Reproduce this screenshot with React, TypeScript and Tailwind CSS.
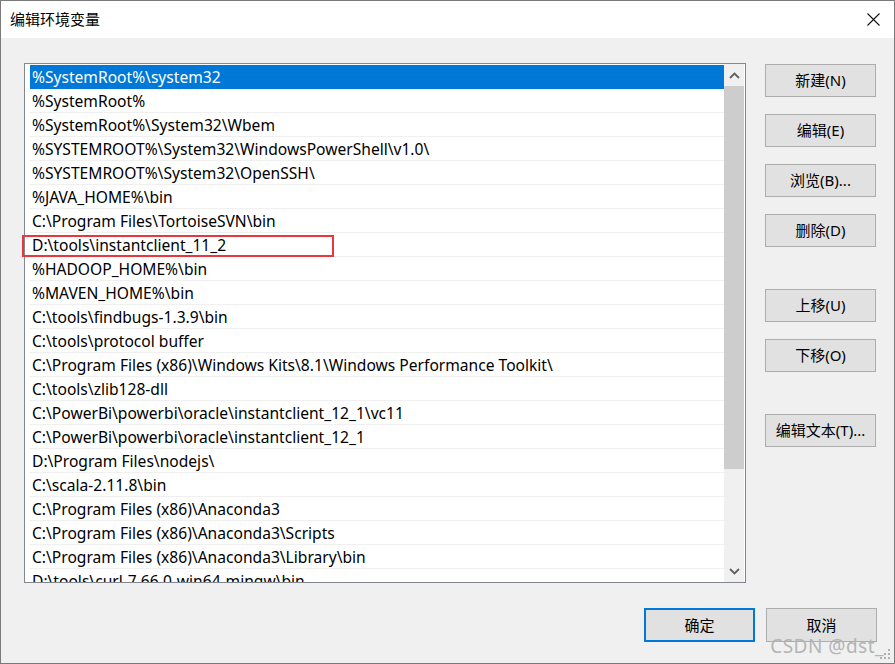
import React from "react";

const paths = [
  "%SystemRoot%\\system32",
  "%SystemRoot%",
  "%SystemRoot%\\System32\\Wbem",
  "%SYSTEMROOT%\\System32\\WindowsPowerShell\\v1.0\\",
  "%SYSTEMROOT%\\System32\\OpenSSH\\",
  "%JAVA_HOME%\\bin",
  "C:\\Program Files\\TortoiseSVN\\bin",
  "D:\\tools\\instantclient_11_2",
  "%HADOOP_HOME%\\bin",
  "%MAVEN_HOME%\\bin",
  "C:\\tools\\findbugs-1.3.9\\bin",
  "C:\\tools\\protocol buffer",
  "C:\\Program Files (x86)\\Windows Kits\\8.1\\Windows Performance Toolkit\\",
  "C:\\tools\\zlib128-dll",
  "C:\\PowerBi\\powerbi\\oracle\\instantclient_12_1\\vc11",
  "C:\\PowerBi\\powerbi\\oracle\\instantclient_12_1",
  "D:\\Program Files\\nodejs\\",
  "C:\\scala-2.11.8\\bin",
  "C:\\Program Files (x86)\\Anaconda3",
  "C:\\Program Files (x86)\\Anaconda3\\Scripts",
  "C:\\Program Files (x86)\\Anaconda3\\Library\\bin",
  "D:\\tools\\curl-7.66.0-win64-mingw\\bin",
];

function Btn({ label, className = "" }: { label: string; className?: string }) {
  return (
    <button
      type="button"
      className={`w-[111px] h-[33px] border border-[#adadad] bg-[#e1e1e1] text-[15px] text-black flex items-center justify-center ${className}`}
    >
      {label}
    </button>
  );
}

function Chevron({ down }: { down?: boolean }) {
  return (
    <svg width="11" height="7" viewBox="0 0 11 7" className={down ? "rotate-180" : ""}>
      <path d="M1 6 L5.5 1.5 L10 6" fill="none" stroke="#606060" strokeWidth="1.8" />
    </svg>
  );
}

export default function App() {
  return (
    <div
      className="w-[895px] h-[664px] border border-[#7a7a7a] bg-[#f0f0f0] flex flex-col relative overflow-hidden text-black"
      style={{ fontFamily: '"Noto Sans", "Noto Sans CJK SC", sans-serif' }}
    >
      {/* title bar */}
      <div className="h-[37px] bg-white flex items-center justify-between pl-[9px] pr-[14px]">
        <span className="text-[15px]">编辑环境变量</span>
        <svg width="13" height="13" viewBox="0 0 13 13">
          <path d="M0.5 0.5 L12.5 12.5 M12.5 0.5 L0.5 12.5" stroke="#111" strokeWidth="1.1" />
        </svg>
      </div>

      <div className="flex-1 flex flex-col pl-[23px] pr-[17px] pt-[25px]">
        <div className="flex gap-[19px]">
          {/* list box */}
          <div className="relative w-[722px] h-[520px] border border-[#828790] bg-white flex">
            <div className="flex-1 pl-[5px] pt-[1px] overflow-hidden">
              {paths.map((p, i) => (
                <div
                  key={p}
                  className={`h-[24px] flex items-center pl-[2px] pt-[2px] text-[15.6px] whitespace-nowrap border-b ${
                    i === 0
                      ? "bg-[#0078d7] text-white border-[#0078d7]"
                      : "border-[#f0f0f0]"
                  }`}
                >
                  {p}
                </div>
              ))}
            </div>
            {/* scrollbar */}
            <div className="w-[20px] mr-[1px] bg-[#f0f0f0] flex flex-col">
              <div className="h-[22px] flex items-center justify-center">
                <Chevron />
              </div>
              <div className="h-[383px] bg-[#cdcdcd]" />
              <div className="flex-1" />
              <div className="h-[22px] flex items-center justify-center">
                <Chevron down />
              </div>
            </div>
            {/* highlight annotation */}
            <div className="absolute left-[-3px] top-[171px] w-[312px] h-[22px] border-2 border-[#e8383d]" />
          </div>

          <div className="flex flex-col pt-[1px]">
            <Btn label="新建(N)" />
            <Btn label="编辑(E)" className="mt-[17px]" />
            <Btn label="浏览(B)..." className="mt-[17px]" />
            <Btn label="删除(D)" className="mt-[17px]" />
            <Btn label="上移(U)" className="mt-[42px]" />
            <Btn label="下移(O)" className="mt-[17px]" />
            <Btn label="编辑文本(T)..." className="mt-[42px]" />
          </div>
        </div>

        <div className="flex justify-end gap-[11px] mt-[25px]">
          <button
            type="button"
            className="w-[111px] h-[34px] border-2 border-[#0078d7] bg-[#e1e1e1] text-[15px] flex items-center justify-center"
          >
            确定
          </button>
          <button
            type="button"
            className="w-[111px] h-[34px] border border-[#adadad] bg-[#e1e1e1] text-[15px] flex items-center justify-center"
          >
            取消
          </button>
        </div>
      </div>

      {/* watermark */}
      <span className="absolute right-[10px] bottom-[7px] text-[19px] text-[#b4b4b4] leading-none tracking-[0.5px]">
        CSDN @dst_
      </span>
      {/* resize grip */}
      <svg className="absolute right-[3px] bottom-[3px]" width="11" height="11" viewBox="0 0 11 11">
        {[
          [8, 0], [8, 4], [4, 4], [8, 8], [4, 8], [0, 8],
        ].map(([x, y]) => (
          <rect key={`${x}-${y}`} x={x} y={y} width="2" height="2" fill="#b0b0b0" />
        ))}
      </svg>
    </div>
  );
}
